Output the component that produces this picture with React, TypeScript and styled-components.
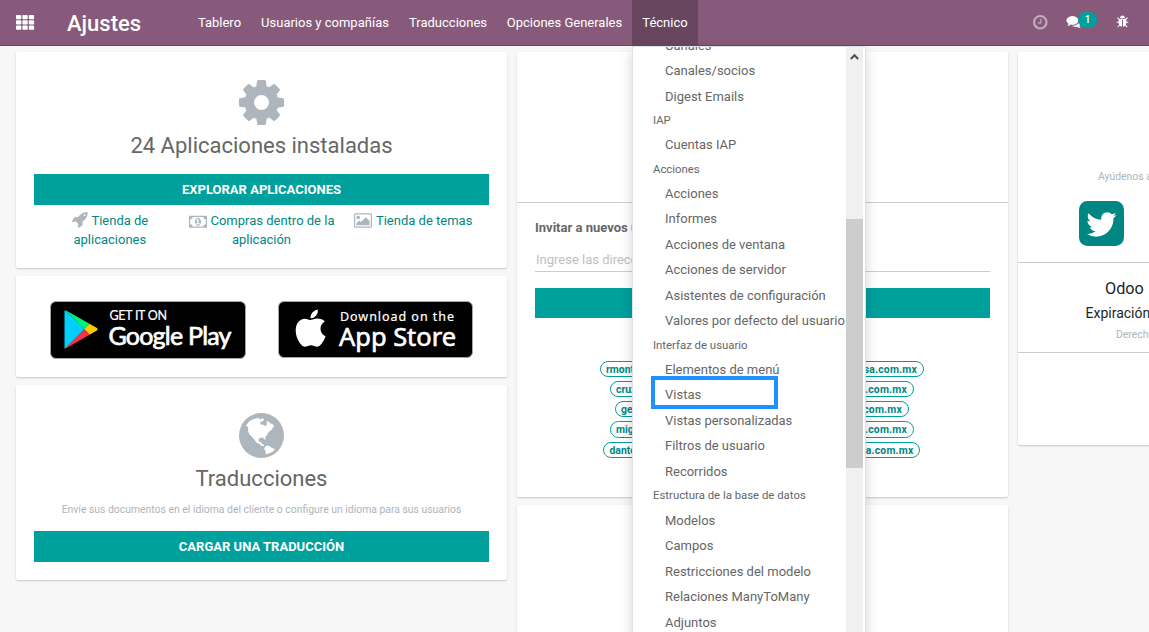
import React from 'react';
import styled, { createGlobalStyle } from 'styled-components';

const Global = createGlobalStyle`
  *, *::before, *::after { box-sizing: border-box; }
  html, body { margin: 0; padding: 0; overflow: hidden; }
  body {
    background: #f7f7f7;
    color: #666;
    font-family: Roboto, "Liberation Sans", sans-serif;
    font-size: 13px;
    line-height: 1.5;
  }
`;

const TEAL = '#00a09d';
const LINK = '#008784';
const MUTED = '#adb5bd';

const Page = styled.div`
  position: relative;
  width: 1149px;
  height: 632px;
  overflow: hidden;
  display: flex;
  flex-direction: column;
`;

const Navbar = styled.header`
  flex: none;
  height: 46px;
  display: flex;
  align-items: stretch;
  background: #875a7b;
  border-bottom: 1px solid #68465f;
  color: #fff;
`;

const AppsButton = styled.div`
  width: 67px;
  padding: 15px 0 0 16px;
  line-height: 0;
`;

const Brand = styled.div`
  width: 121px;
  font-size: 22px;
  font-weight: 500;
  line-height: 47px;
`;

const NavMenu = styled.nav`
  display: flex;
  flex: 1;
`;

const NavItem = styled.a<{ $active?: boolean; $width: number }>`
  width: ${p => p.$width}px;
  height: 45px;
  text-align: center;
  line-height: 45px;
  white-space: nowrap;
  background: ${p => (p.$active ? '#68465f' : 'transparent')};
`;

const Systray = styled.div`
  display: flex;
  width: 117px;
  padding: 15px 0 0 0.5px;
`;

const TrayItem = styled.div<{ $width: number; $dim?: boolean }>`
  position: relative;
  width: ${p => p.$width}px;
  line-height: 0;
  opacity: ${p => (p.$dim ? 0.5 : 1)};
`;

const Counter = styled.span`
  position: absolute;
  left: 12px;
  top: -3px;
  width: 19px;
  height: 16px;
  border-radius: 8px;
  background: ${TEAL};
  font-size: 10px;
  font-weight: 500;
  line-height: 16px;
  text-align: center;
`;

const Board = styled.main`
  flex: 1;
  min-height: 0;
  display: grid;
  grid-template-columns: 491px 491px 491px;
  column-gap: 10px;
  align-items: start;
  padding: 6px 0 0 16px;
`;

const Column = styled.div`
  display: flex;
  flex-direction: column;
  gap: 8px;
`;

const Card = styled.section<{ $height: number; $top?: number }>`
  height: ${p => p.$height}px;
  padding: ${p => p.$top ?? 0}px 18px 0;
  display: flex;
  flex-direction: column;
  align-items: center;
  background: #fff;
  border-radius: 2px;
  box-shadow: 0 1px 2px rgba(0, 0, 0, 0.2);
`;

const Glyph = styled.svg`
  fill: currentColor;
  overflow: visible;
`;

const BigIcon = styled.div`
  height: 45px;
  line-height: 0;
  color: ${MUTED};
`;

const Heading = styled.h2`
  margin: 4px 0 0;
  font-size: 22px;
  font-weight: 400;
  line-height: 34px;
`;

const Button = styled.button<{ $top: number; $height?: number }>`
  align-self: stretch;
  flex: none;
  height: ${p => p.$height ?? 31}px;
  margin: ${p => p.$top}px 0 0;
  padding: 0;
  border: 0;
  background: ${TEAL};
  color: #fff;
  font: 700 13px/31px Roboto, sans-serif;
  text-transform: uppercase;
`;

const Links = styled.div`
  align-self: stretch;
  display: grid;
  grid-template-columns: repeat(3, 1fr);
  margin-top: 6px;
`;

const StoreLink = styled.a`
  padding: 0 1px;
  text-align: center;
  color: ${LINK};
  line-height: 19px;
  svg { color: ${MUTED}; vertical-align: -3px; margin: 0 3.5px 0 0.5px; }
`;

const Small = styled.p<{ $top: number }>`
  margin: ${p => p.$top}px 0 0;
  font-size: 10.4px;
  line-height: 16px;
  color: ${MUTED};
  white-space: nowrap;
`;

const StoreRow = styled.div`
  display: flex;
  align-items: flex-start;
  gap: 32px;
  width: 423px;
`;

const StoreBadge = styled.a<{ $width: number; $height: number }>`
  display: block;
  width: ${p => p.$width}px;
  height: ${p => p.$height}px;
  border: 1px solid #a6a6a6;
  border-radius: 6px;
  background: #000;
  svg { display: block; margin: -1px; }
`;

const InviteTop = styled.div`
  align-self: stretch;
  margin: 0 -18px;
  height: 151px;
  border-bottom: 1px solid #ccc;
`;

const InviteTitle = styled.div`
  align-self: stretch;
  margin-top: 15px;
  font-weight: 700;
  line-height: 20px;
`;

const InviteInput = styled.div`
  align-self: stretch;
  margin-top: 9px;
  height: 25px;
  padding-left: 1px;
  border-bottom: 1px solid #ccc;
  color: #c0c0c0;
  line-height: 25px;
  white-space: nowrap;
  overflow: hidden;
`;

const Pending = styled.div`
  display: flex;
  flex-direction: column;
  align-items: center;
  gap: 4px;
  margin: 42.6px 2px 0 0;
`;

const Pill = styled.a<{ $width: number }>`
  display: flex;
  justify-content: space-between;
  width: ${p => p.$width}px;
  height: 16.3px;
  padding: 0 5.5px;
  border: 1px solid ${TEAL};
  border-radius: 9px;
  color: ${LINK};
  font-size: 10.4px;
  font-weight: 700;
  line-height: 15px;
`;

const Domain = styled.span`
  letter-spacing: 0.2px;
`;

const AboutPart = styled.div<{ $height: number; $top: number }>`
  align-self: stretch;
  flex: none;
  margin: 0 -18px;
  height: ${p => p.$height}px;
  padding-top: ${p => p.$top}px;
  border-bottom: 1px solid #ccc;
  white-space: nowrap;
`;

const AboutLine = styled.div<{ $left: number; $size: number; $height: number; $muted?: boolean }>`
  padding-left: ${p => p.$left}px;
  font-size: ${p => p.$size}px;
  line-height: ${p => p.$height}px;
  color: ${p => (p.$muted ? MUTED : '#212529')};
`;

const Twitter = styled.div`
  margin: 16px 0 0 61px;
  line-height: 0;
  color: ${LINK};
`;

const Dropdown = styled.div`
  position: absolute;
  left: 632px;
  top: 46px;
  width: 234px;
  height: 600px;
  display: flex;
  justify-content: space-between;
  border: 1px solid #dee2e6;
  background: #fff;
  box-shadow: 0 6px 12px rgba(0, 0, 0, 0.175);
`;

const MenuList = styled.div`
  height: 585px;
  width: 213px;
  overflow: hidden;
`;

const MenuScroll = styled.div`
  margin-top: -14.4px;
`;

const MenuItem = styled.a`
  display: block;
  height: 25.5px;
  padding-left: 32px;
  line-height: 25.5px;
  white-space: nowrap;
`;

const MenuHeader = styled.div`
  height: 23.12px;
  padding-left: 20px;
  font-size: 11.37px;
  line-height: 23.04px;
  white-space: nowrap;
`;

const Scrollbar = styled.div`
  width: 17px;
  margin-right: 2px;
  background: #f0f0f0;
`;

const ScrollArrow = styled.div`
  height: 172px;
  padding: 6px 0 0 4px;
  line-height: 0;
`;

const Thumb = styled.div`
  height: 249px;
  background: #cdcdcd;
`;

const Highlight = styled.div`
  position: absolute;
  left: 651px;
  top: 376px;
  width: 127px;
  height: 33px;
  border: 4px solid #1e90ff;
`;

const paths = {
  cog: 'M1152 896q0-106-75-181t-181-75-181 75-75 181 75 181 181 75 181-75 75-181zm512-109v222q0 12-8 23t-20 13l-185 28q-19 54-39 91 35 50 107 138 10 12 10 25t-9 23q-27 37-99 108t-94 71q-12 0-26-9l-138-108q-44 23-91 38-16 136-29 186-7 28-36 28h-222q-14 0-24.5-8.5t-11.5-21.5l-28-184q-49-16-90-37l-141 107q-10 9-25 9-14 0-25-11-126-114-165-168-7-10-7-23 0-12 8-23 15-21 51-66.5t54-70.5q-27-50-41-99l-183-27q-13-2-21-12.5t-8-23.5v-222q0-12 8-23t19-13l186-28q14-46 39-92-40-57-107-138-10-12-10-24 0-10 9-23 26-36 98.5-107.5t94.5-71.5q13 0 26 10l138 107q44-23 91-38 16-136 29-186 7-28 36-28h222q14 0 24.5 8.5t11.5 21.5l28 184q49 16 90 37l142-107q9-9 24-9 13 0 25 10 129 119 165 170 7 8 7 22 0 12-8 23-15 21-51 66.5t-54 70.5q26 50 41 98l183 28q13 2 21 12.5t8 23.5z',
  clock: 'M1024 544v448q0 14-9 23t-23 9h-320q-14 0-23-9t-9-23v-64q0-14 9-23t23-9h224v-352q0-14 9-23t23-9h64q14 0 23 9t9 23zm416 352q0-148-73-273t-198-198-273-73-273 73-198 198-73 273 73 273 198 198 273 73 273-73 198-198 73-273zm224 0q0 209-103 385.5t-279.5 279.5-385.5 103-385.5-103-279.5-279.5-103-385.5 103-385.5 279.5-279.5 385.5-103 385.5 103 279.5 279.5 103 385.5z',
  comments: 'M1408 768q0 139-94 257t-256.5 186.5-353.5 68.5q-86 0-176-16-124 88-278 128-36 9-86 16h-3q-11 0-20.5-8t-11.5-21q-1-3-1-6.5t.5-6.5 2-6l2.5-5 3.5-5.5 4-5 4.5-5 4-4.5q5-6 23-25t26-29.5 22.5-29 25-38.5 20.5-44q-124-72-195-177t-71-224q0-139 94-257t256.5-186.5 353.5-68.5 353.5 68.5 256.5 186.5 94 257zm384 256q0 120-71 224.5t-195 176.5q10 24 20.5 44t25 38.5 22.5 29 26 29.5 23 25q1 1 4 4.5t4.5 5 4 5 3.5 5.5l2.5 5 2 6 .5 6.5-1 6.5q-3 14-13 22t-22 7q-50-7-86-16-154-40-278-128-90 16-176 16-271 0-472-132 58 4 88 4 161 0 309-45t264-129q125-92 192-212t67-254q0-77-23-152 129 71 204 178t75 230z',
  bug: 'M1696 960q0 26-19 45t-45 19h-224q0 171-67 290l208 209q19 19 19 45t-19 45q-18 19-45 19t-45-19l-198-197q-5 5-15 13t-42 28.5-65 36.5-82 29-97 13v-896h-128v896q-51 0-101.5-13.5t-87-33-66-39-43.5-32.5l-15-14-183 207q-20 21-48 21-24 0-43-16-19-18-20.5-44.5t15.5-46.5l202-227q-58-114-58-274h-224q-26 0-45-19t-19-45 19-45 45-19h224v-294l-173-173q-19-19-19-45t19-45 45-19 45 19l173 173h844l173-173q19-19 45-19t45 19 19 45-19 45l-173 173v294h224q26 0 45 19t19 45zm-480-576h-640q0-133 93.5-226.5t226.5-93.5 226.5 93.5 93.5 226.5z',
  rocket: 'M1440 448q0-40-28-68t-68-28-68 28-28 68 28 68 68 28 68-28 28-68zm224-288q0 249-75.5 430.5t-253.5 360.5q-81 80-195 176l-20 379q-2 16-16 26l-384 224q-7 4-16 4-12 0-23-9l-64-64q-13-14-8-32l85-276-281-281-276 85q-3 1-9 1-14 0-23-9l-64-64q-17-19-5-39l224-384q10-14 26-16l379-20q96-114 176-195 188-187 358-258t431-71q14 0 24 9.5t10 22.5z',
  picture: 'M704 576q0 80-56 136t-136 56-136-56-56-136 56-136 136-56 136 56 56 136zm1024 384v448h-1408v-192l320-320 160 160 512-512zm96-704h-1600q-13 0-22.5 9.5t-9.5 22.5v1216q0 13 9.5 22.5t22.5 9.5h1600q13 0 22.5-9.5t9.5-22.5v-1216q0-13-9.5-22.5t-22.5-9.5zm160 32v1216q0 66-47 113t-113 47h-1600q-66 0-113-47t-47-113v-1216q0-66 47-113t113-47h1600q66 0 113 47t47 113z',
  money: 'M768 1152h384v-96h-128v-448h-114l-148 137 77 80q42-37 55-57h2v288h-128v96zm512-256q0 70-21 142t-59.5 134-101.5 101-138 39-138-39-101.5-101-59.5-134-21-142 21-142 59.5-134 101.5-101 138-39 138 39 101.5 101 59.5 134 21 142zm512 256v-512q-106 0-181-75t-75-181h-1152q0 106-75 181t-181 75v512q106 0 181 75t75 181h1152q0-106 75-181t181-75zm128-832v1152q0 26-19 45t-45 19h-1792q-26 0-45-19t-19-45v-1152q0-26 19-45t45-19h1792q26 0 45 19t19 45z',
  twitter: 'M1408 610q-56 25-121 34 68-40 93-117-65 38-134 51-61-66-153-66-87 0-148.5 61.5t-61.5 148.5q0 29 5 48-129-7-242-65t-192-155q-29 50-29 106 0 114 91 175-47-1-100-26v2q0 75 50 133.5t123 72.5q-29 8-51 8-13 0-39-4 21 63 74.5 104t121.5 42q-116 90-261 90-26 0-50-3 148 94 322 94 112 0 210-35.5t168-95 120.5-137 75-162 24.5-168.5q0-18-1-27 63-45 105-109zm256-194v960q0 119-84.5 203.5t-203.5 84.5h-960q-119 0-203.5-84.5t-84.5-203.5v-960q0-119 84.5-203.5t203.5-84.5h960q119 0 203.5 84.5t84.5 203.5z',
};

const Icon = ({ d, box, w, h }: { d: string; box: string; w: number; h: number }) => (
  <Glyph viewBox={box} width={w} height={h}><path d={d} /></Glyph>
);

const Grid = () => (
  <Glyph width="18" height="15" viewBox="0 0 18 15">
    {[0, 5.3, 10.6].map(y => [0, 6.4, 12.8].map(x => (
      <rect key={`${x}-${y}`} x={x} y={y} width="5.3" height="4.2" rx="0.8" />
    )))}
  </Glyph>
);

const Globe = () => (
  <Glyph width="45" height="45" viewBox="0 0 45 45">
    <circle cx="22.5" cy="22.5" r="22.5" />
    <path fill="#fff" d="M7 12.6L10 8.4 13.5 6.5 17 5.2 20 5 21 6.4 24 5.3 25.3 6.5 23.8 8.2 21 9.3 22 11.6 25 12 26.5 13.3 28.2 11 27 8.6 29.5 8.5 31.5 10.5 33.5 11 35.5 14 32.5 15 34 16 31.5 17.5 29.3 19.5 28 22 26.3 24 26.5 27 25 26 23.6 24.6 20.5 25 19.5 27 20.4 29.2 22.3 28.6 22.6 31 24.6 31.6 25.3 33.3 23 33 20 30.8 17.4 29.4 15.3 26.5 12.5 23.3 10 21 9 17.5 9.2 14.4Z" />
    <path fill="#fff" d="M26.3 33.2L29 32.6 31 33.6 33 35 36 36 34 38.6 30.5 40.3 26.5 41.3 26.6 38 25.2 36Z" />
  </Glyph>
);

const GooglePlay = () => (
  <svg width="196" height="58" viewBox="0 0 196 58">
    <path fill="#00d0ff" d="M14.5 10v37q0 .8.8.4L34.5 28 15.2 9.2q-.7 0-.7.8Z" />
    <path fill="#00f076" d="M15.2 9.2L34.5 28.3 39.5 22.8 17 10Q15.7 9.2 15.2 9.2Z" />
    <path fill="#ffc900" d="M39.5 22.8L46.5 26.7Q48.8 28.3 46.5 29.8L39.5 33.8 34.2 28.3Z" />
    <path fill="#f23349" d="M34.2 28.3L39.5 33.8 17 46.8Q15.7 47.6 14.9 47.2Z" />
    <g fill="#fff" stroke="#fff" fontFamily="Lato, sans-serif">
      <text x="59.5" y="19" fontSize="12.5" strokeWidth="0.2" textLength="57.5" lengthAdjust="spacing">GET IT ON</text>
      <text x="58.5" y="43.5" fontSize="25" strokeWidth="0.7" textLength="123" lengthAdjust="spacing">Google Play</text>
    </g>
  </svg>
);

const AppStore = () => (
  <svg width="195" height="57" viewBox="0 0 195 57">
    <g fill="#fff">
      <path d="M39.9 8.5Q40.3 12 38 14.8 35.7 17.5 32.4 17.3 32.2 14 34.4 11.5 36.7 8.9 39.9 8.5Z" />
      <path d="M46.8 20.4Q42.4 23.2 42.5 27.8 42.7 33.2 47.6 35.2 46.3 39.2 43.4 43.1 41.4 45.7 39.2 45.7 37.8 45.7 36 44.9 32.9 43.7 29.9 45 28.2 45.8 26.9 45.8 24.4 45.8 22.1 42.5 17.8 36.5 17.7 29.5 17.7 23 21.3 19.9 23.8 17.8 27 17.8 28.7 17.8 30.8 18.7 32.7 19.4 34.6 18.6 37 17.6 39.2 17.6 44 17.6 46.8 20.4Z" />
      <g fontFamily='"Noto Sans", sans-serif' stroke="#fff">
        <text x="62" y="19.5" fontSize="12.5" strokeWidth="0.2" textLength="114" lengthAdjust="spacing">Download on the</text>
        <text x="61" y="45" fontSize="25" strokeWidth="0.6" textLength="117" lengthAdjust="spacingAndGlyphs">App Store</text>
      </g>
    </g>
  </svg>
);

const pending: [number, string, string][] = [
  [324, 'rmontero', 'usa.com.mx'],
  [304, 'cruz', 'usa.com.mx'],
  [294, 'gerencia', 'usa.com.mx'],
  [304, 'miguel', 'usa.com.mx'],
  [317, 'dante', 'usa.com.mx'],
];

const sections: { title?: string; items: string[] }[] = [
  { items: ['Canales', 'Canales/socios', 'Digest Emails'] },
  { title: 'IAP', items: ['Cuentas IAP'] },
  { title: 'Acciones', items: ['Acciones', 'Informes', 'Acciones de ventana', 'Acciones de servidor', 'Asistentes de configuración', 'Valores por defecto del usuario'] },
  { title: 'Interfaz de usuario', items: ['Elementos de menú', 'Vistas', 'Vistas personalizadas', 'Filtros de usuario', 'Recorridos'] },
  { title: 'Estructura de la base de datos', items: ['Modelos', 'Campos', 'Restricciones del modelo', 'Relaciones ManyToMany', 'Adjuntos'] },
];

export default function App() {
  return (
    <Page>
      <Global />
      <Navbar>
        <AppsButton><Grid /></AppsButton>
        <Brand>Ajustes</Brand>
        <NavMenu>
          <NavItem $width={63}>Tablero</NavItem>
          <NavItem $width={148}>Usuarios y compañías</NavItem>
          <NavItem $width={98}>Traducciones</NavItem>
          <NavItem $width={135}>Opciones Generales</NavItem>
          <NavItem $width={66} $active>Técnico</NavItem>
        </NavMenu>
        <Systray>
          <TrayItem $width={33.5} $dim><Icon d={paths.clock} box="128 128 1536 1536" w={14.5} h={14.5} /></TrayItem>
          <TrayItem $width={50}>
            <Icon d={paths.comments} box="0 128 1792 1536" w={16} h={13} />
            <Counter>1</Counter>
          </TrayItem>
          <TrayItem $width={30}><Icon d={paths.bug} box="32 0 1664 1792" w={12.5} h={13.5} /></TrayItem>
        </Systray>
      </Navbar>

      <Board>
        <Column>
          <Card $height={216} $top={28}>
            <BigIcon><Icon d={paths.cog} box="128 128 1536 1536" w={45} h={45} /></BigIcon>
            <Heading>24 Aplicaciones instaladas</Heading>
            <Button $top={11}>Explorar aplicaciones</Button>
            <Links>
              <StoreLink><Icon d={paths.rocket} box="64 128 1600 1664" w={16} h={16} />Tienda de aplicaciones</StoreLink>
              <StoreLink><Icon d={paths.money} box="0 192 1920 1408" w={18} h={13.5} />Compras dentro de la aplicación</StoreLink>
              <StoreLink><Icon d={paths.picture} box="64 128 1920 1536" w={18} h={15} />Tienda de temas</StoreLink>
            </Links>
          </Card>
          <Card $height={101} $top={25}>
            <StoreRow>
              <StoreBadge $width={196} $height={58}><GooglePlay /></StoreBadge>
              <StoreBadge $width={195} $height={57}><AppStore /></StoreBadge>
            </StoreRow>
          </Card>
          <Card $height={195} $top={28}>
            <BigIcon><Globe /></BigIcon>
            <Heading>Traducciones</Heading>
            <Small $top={6}>Envíe sus documentos en el idioma del cliente o configure un idioma para sus usuarios</Small>
            <Button $top={13}>Cargar una traducción</Button>
          </Card>
        </Column>

        <Column>
          <Card $height={445}>
            <InviteTop />
            <InviteTitle>Invitar a nuevos usuarios</InviteTitle>
            <InviteInput>Ingrese las direcciones</InviteInput>
            <Button $top={16} $height={30} />
            <Pending>
              {pending.map(([width, start, end]) => (
                <Pill key={start} $width={width}><span>{start}</span><Domain>{end}</Domain></Pill>
              ))}
            </Pending>
          </Card>
          <Card $height={180} />
        </Column>

        <Column>
          <Card $height={393}>
            <AboutPart $height={211} $top={117}>
              <AboutLine $left={80} $size={10.4} $height={16} $muted>Ayúdenos a difundir</AboutLine>
              <Twitter><Icon d={paths.twitter} box="128 128 1536 1536" w={45} h={45} /></Twitter>
            </AboutPart>
            <AboutPart $height={90} $top={13}>
              <AboutLine $left={87} $size={16.25} $height={25}>Odoo 12.0</AboutLine>
              <AboutLine $left={67.5} $size={14} $height={25}>Expiración de la base</AboutLine>
              <AboutLine $left={98} $size={10.4} $height={17} $muted>Derechos de autor</AboutLine>
            </AboutPart>
          </Card>
        </Column>
      </Board>

      <Dropdown>
        <MenuList>
          <MenuScroll>
            {sections.map((section, i) => (
              <div key={i}>
                {section.title && <MenuHeader>{section.title}</MenuHeader>}
                {section.items.map(item => <MenuItem key={item}>{item}</MenuItem>)}
              </div>
            ))}
          </MenuScroll>
        </MenuList>
        <Scrollbar>
          <ScrollArrow>
            <svg width="9" height="8" viewBox="0 0 9 8"><path d="M0.8 6L4.5 2.2 8.2 6" fill="none" stroke="#505050" strokeWidth="2" /></svg>
          </ScrollArrow>
          <Thumb />
        </Scrollbar>
      </Dropdown>
      <Highlight />
    </Page>
  );
}
